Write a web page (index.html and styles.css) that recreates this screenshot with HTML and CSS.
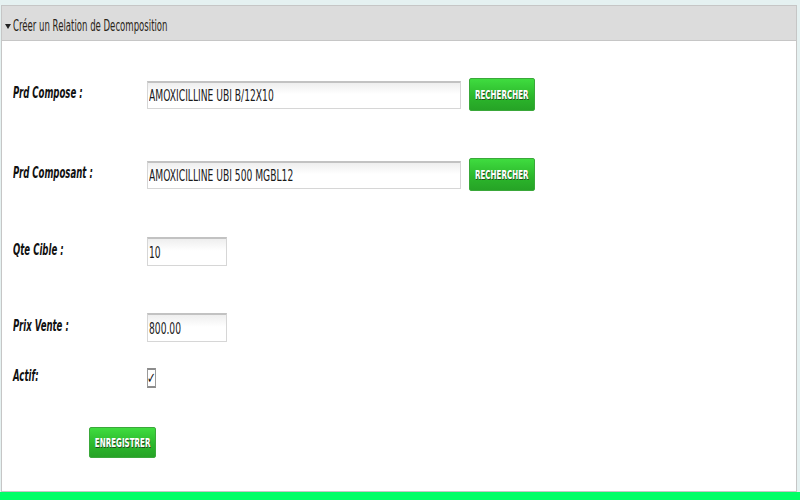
FILE: index.html
```html
<!DOCTYPE html>
<html lang="fr">
<head>
<meta charset="utf-8">
<title>Créer un Relation de Decomposition</title>
<link rel="stylesheet" href="styles.css">
</head>
<body>
<div class="page">
  <section class="panel">
    <header class="panel-head">
      <svg class="caret" width="6" height="5" viewBox="0 0 6 5"><path d="M0 0H6L3 5Z" fill="#222"/></svg>
      <span class="sq title">Créer un Relation de Decomposition</span>
    </header>
    <div class="form">
      <div class="row row-search">
        <div class="lbl"><span class="sq">Prd Compose :</span></div>
        <div class="ctl">
          <div class="field wide"><span class="sq">AMOXICILLINE UBI B/12X10</span></div>
          <div class="btn search"><span class="sq">RECHERCHER</span></div>
        </div>
      </div>
      <div class="row row-search">
        <div class="lbl"><span class="sq">Prd Composant :</span></div>
        <div class="ctl">
          <div class="field wide"><span class="sq">AMOXICILLINE UBI 500 MGBL12</span></div>
          <div class="btn search"><span class="sq">RECHERCHER</span></div>
        </div>
      </div>
      <div class="row row-small">
        <div class="lbl"><span class="sq">Qte Cible :</span></div>
        <div class="ctl">
          <div class="field short"><span class="sq">10</span></div>
        </div>
      </div>
      <div class="row row-small">
        <div class="lbl"><span class="sq">Prix Vente :</span></div>
        <div class="ctl">
          <div class="field short"><span class="sq">800.00</span></div>
        </div>
      </div>
      <div class="row row-check">
        <div class="lbl"><span class="sq">Actif:</span></div>
        <div class="ctl">
          <div class="check"><span class="tick">✓</span></div>
        </div>
      </div>
      <div class="actions">
        <div class="btn save"><span class="sq">ENREGISTRER</span></div>
      </div>
    </div>
  </section>
</div>
<footer class="bar"></footer>
</body>
</html>
```
FILE: styles.css
```css
html, body {
  margin: 0;
  padding: 0;
  background: #e5f1f1;
  font-family: "DejaVu Sans", Verdana, sans-serif;
  color: #222;
}
.page {
  padding: 5px 3px 0 1px;
}
.panel {
  height: 487px;
  box-sizing: border-box;
  border: 1px solid #c6c6c6;
  background: #fff;
  display: flex;
  flex-direction: column;
}
.panel-head {
  height: 35px;
  box-sizing: border-box;
  padding-top: 6px;
  background: #dcdcdc;
  border-bottom: 1px solid #c6c6c6;
  display: flex;
  align-items: center;
  padding-left: 3px;
  gap: 2px;
}
.caret {
  margin-top: 1px;
}
.sq {
  display: inline-block;
  white-space: nowrap;
  transform-origin: left center;
  transform: scaleX(0.62);
}
.title {
  font-size: 15px;
  color: #2a2418;
  transform: scaleX(0.57);
}
.form {
  padding: 37px 0 0 11px;
  display: flex;
  flex-direction: column;
}
.row {
  display: flex;
  align-items: center;
}
.row-search { height: 33px; }
.row-search + .row-search { margin-top: 47px; }
.row-small { height: 29px; margin-top: 46px; }
.row-small + .row-small { margin-top: 47px; }
.row-check { height: 20px; margin-top: 26px; }
.lbl {
  width: 134px;
  flex: none;
  font-size: 15px;
  font-weight: bold;
  font-style: italic;
  color: #111;
  margin-top: -4px;
}
.lbl .sq { transform: scaleX(0.57); }
.ctl {
  display: flex;
  align-items: center;
  gap: 8px;
}
.field {
  height: 28px;
  box-sizing: border-box;
  border: 1px solid #d6d6d6;
  border-top: 2px solid #c2c2c2;
  background: linear-gradient(#eeeeee, #fff 45%);
  display: flex;
  align-items: center;
  padding: 2px 0 0 1px;
  font-size: 15px;
  color: #1a1a1a;
}
.field .sq { transform: scaleX(0.61); }
.wide { width: 314px; }
.short { width: 80px; height: 29px; }
.btn {
  box-sizing: border-box;
  border: 1px solid #3aa83a;
  border-radius: 2px;
  background: linear-gradient(#3fdc3f, #2bb52b 60%, #26a326);
  display: flex;
  align-items: center;
  justify-content: center;
  color: #fff;
  font-size: 13px;
  font-weight: bold;
  text-shadow: 1px 1px 0 #1f4a1f;
}
.btn .sq {
  transform-origin: center;
  transform: scaleX(0.55);
}
.search { width: 66px; height: 33px; }
.save { width: 67px; height: 31px; }
.check {
  width: 9px;
  height: 20px;
  box-sizing: border-box;
  border: 1px solid #9a9a9a;
  border-top: 2px solid #8c8c8c;
  border-bottom: 2px solid #8c8c8c;
  background: #fff;
  display: flex;
  align-items: center;
  justify-content: center;
  overflow: hidden;
}
.tick {
  font-size: 15px;
  font-weight: bold;
  line-height: 1;
  color: #111;
  display: inline-block;
  transform: scaleX(0.7);
}
.actions {
  margin-top: 39px;
  padding-left: 76px;
  display: flex;
}
.bar {
  height: 8px;
  background: #00ff66;
}
```
